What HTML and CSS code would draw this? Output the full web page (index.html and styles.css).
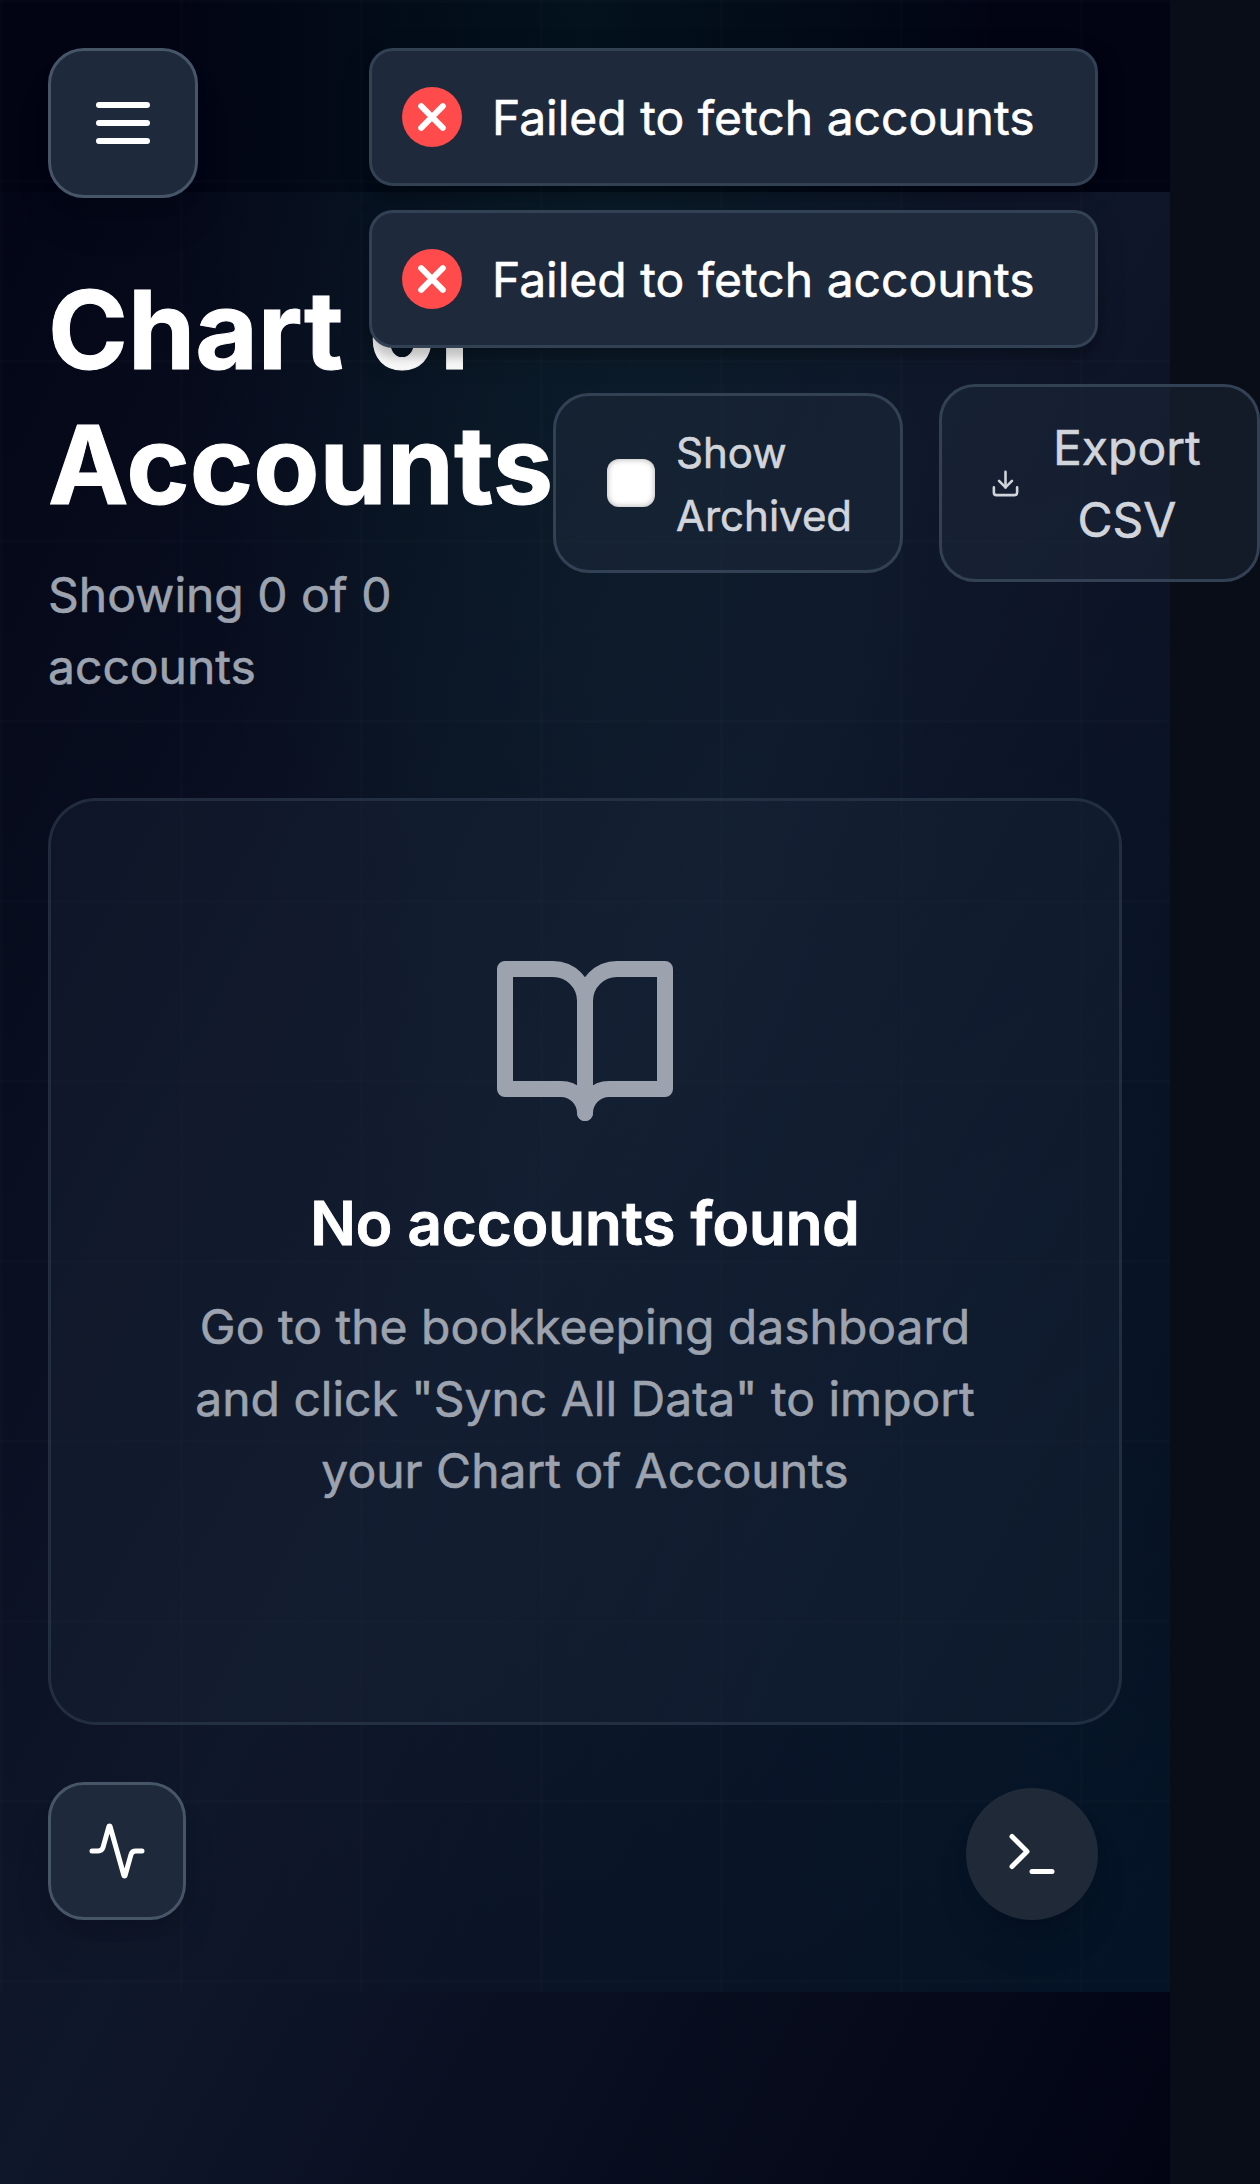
FILE: index.html
```html
<!DOCTYPE html>
<html lang="en">
<head>
<meta charset="utf-8">
<title>Chart of Accounts</title>
<link rel="stylesheet" href="styles.css">
</head>
<body>
<div class="app">
  <div class="topbar"></div>
  <div class="backdrop"></div>
  <main class="content">
    <header class="page-head">
      <div class="heading">
        <h1>Chart of Accounts</h1>
        <p>Showing 0 of 0 accounts</p>
      </div>
      <div class="actions">
        <label class="toggle"><span class="checkbox"></span><span class="label">Show<br>Archived</span></label>
        <button class="export">
          <svg class="export-icon" viewBox="0 0 24 24"><path d="M12 15V3"/><path d="M21 15v4a2 2 0 0 1-2 2H5a2 2 0 0 1-2-2v-4"/><path d="m7 10 5 5 5-5"/></svg>
          <span class="label">Export<br>CSV</span>
        </button>
      </div>
    </header>
    <section class="empty">
      <svg class="empty-icon" viewBox="0 0 24 24"><path d="M2 3h6a4 4 0 0 1 4 4v14a3 3 0 0 0-3-3H2z"/><path d="M22 3h-6a4 4 0 0 0-4 4v14a3 3 0 0 1 3-3h7z"/></svg>
      <h3>No accounts found</h3>
      <p>Go to the bookkeeping dashboard and click "Sync All Data" to import your Chart of Accounts</p>
    </section>
  </main>
  <button class="float menu" aria-label="Menu"><svg viewBox="0 0 24 24"><path d="M4 6h16M4 12h16M4 18h16"/></svg></button>
  <button class="float activity" aria-label="Activity"><svg viewBox="0 0 24 24"><path d="M22 12h-2.48a2 2 0 0 0-1.93 1.46l-2.35 8.36a.25.25 0 0 1-.48 0L9.24 2.18a.25.25 0 0 0-.48 0l-2.35 8.36A2 2 0 0 1 4.49 12H2"/></svg></button>
  <button class="float terminal" aria-label="Terminal"><svg viewBox="0 0 24 24"><path d="m4 17 6-6-6-6"/><path d="M12 19h8"/></svg></button>
  <div class="toasts">
    <div class="toast"><svg viewBox="0 0 20 20"><circle cx="10" cy="10" r="10"/><path d="M6.4 6.4l7.2 7.2M13.6 6.4l-7.2 7.2"/></svg><span class="label">Failed to fetch accounts</span></div>
    <div class="toast"><svg viewBox="0 0 20 20"><circle cx="10" cy="10" r="10"/><path d="M6.4 6.4l7.2 7.2M13.6 6.4l-7.2 7.2"/></svg><span class="label">Failed to fetch accounts</span></div>
  </div>
</div>
</body>
</html>
```
FILE: styles.css
```css
* { box-sizing: border-box; }
body {
  margin: 0;
  background: #090d17;
  font-family: Inter, "Liberation Sans", sans-serif;
  font-size: 48px;
  line-height: 72px;
  color: #fff;
  overflow: hidden;
  -webkit-text-stroke: .6px currentColor;
}
h1, h3, p { margin: 0; }
button { font: inherit; color: inherit; margin: 0; padding: 0; }
svg { display: block; flex: none; fill: none; stroke: currentColor; stroke-width: 2; stroke-linecap: round; stroke-linejoin: round; }

.app {
  position: relative;
  width: 1170px;
  height: 2184px;
  background: linear-gradient(to bottom right, #020414, #0f172a 50%, #020414);
}
.topbar { height: 192px; background: #020414; }
.backdrop {
  position: absolute;
  inset: 0 0 auto 0;
  height: 1992px;
  background:
    linear-gradient(to right, rgba(148, 163, 184, .014) 3px, transparent 3px) 0 0 / 180px 180px,
    linear-gradient(to bottom, rgba(148, 163, 184, .014) 3px, transparent 3px) 0 0 / 180px 180px,
    radial-gradient(ellipse at 50% 0, rgba(16, 185, 129, .08), transparent 50%),
    radial-gradient(ellipse at 100% 100%, rgba(10, 180, 220, .08), transparent 55%);
}

.label { padding-top: 2px; }
.content { position: relative; padding: 72px 48px 0; }
.page-head { display: flex; align-items: center; width: 1212px; height: 438px; }
.heading { width: 505px; flex: none; }
.heading h1 { margin-top: -2px; font-size: 108px; line-height: 135px; font-weight: 700; -webkit-text-stroke-width: 1px; }
.heading p { margin-top: 27px; width: 400px; color: #9ca3af; }
.actions { display: flex; align-items: center; gap: 36px; flex: 1; }
.toggle, .export {
  display: flex;
  align-items: center;
  border: 3px solid #334155;
  border-radius: 36px;
  background: rgba(30, 41, 59, .5);
  color: #d1d5db;
}
.toggle { width: 350px; height: 180px; padding-left: 51px; gap: 21px; font-size: 42px; line-height: 63px; }
.checkbox { width: 48px; height: 48px; border-radius: 12px; background: #fff; box-shadow: inset 0 0 6px rgba(0, 0, 0, .35); }
.export { width: 321px; height: 198px; padding-left: 48px; gap: 32px; text-align: center; }
.export-icon { width: 31px; height: 31px; }

.empty {
  margin-top: 96px;
  height: 927px;
  padding: 144px 117px;
  display: flex;
  flex-direction: column;
  align-items: center;
  text-align: center;
  border: 3px solid rgba(51, 65, 85, .5);
  border-radius: 48px;
  background: rgba(30, 41, 59, .35);
  color: #9ca3af;
}
.empty-icon { width: 192px; height: 192px; }
.empty h3 { margin: 49px 0 30px; font-size: 60px; line-height: 75px; font-weight: 600; color: #fff; -webkit-text-stroke-width: .9px; }

.float {
  position: absolute;
  display: flex;
  align-items: center;
  justify-content: center;
  border: 3px solid #475569;
  border-radius: 36px;
  background: #1e293b;
  box-shadow: 0 30px 45px -9px rgba(0, 0, 0, .1), 0 12px 18px -6px rgba(0, 0, 0, .1);
}
.float svg { width: 60px; height: 60px; }
.menu { left: 48px; top: 48px; width: 150px; height: 150px; }
.float.menu svg { width: 72px; height: 72px; }
.activity { left: 48px; top: 1782px; width: 138px; height: 138px; }
.terminal { left: 966px; top: 1788px; width: 132px; height: 132px; border: 0; border-radius: 50%; background: #1f2937; }

.toasts { position: absolute; top: 48px; right: 72px; display: flex; flex-direction: column; gap: 24px; }
.toast {
  display: flex;
  align-items: center;
  gap: 30px;
  width: 729px;
  height: 138px;
  padding: 0 30px;
  border: 3px solid #334155;
  border-radius: 24px;
  background: #1e293b;
  box-shadow: 0 9px 30px rgba(0, 0, 0, .15), 0 9px 9px rgba(0, 0, 0, .15);
}
.toast svg { width: 60px; height: 60px; }
.toast circle { fill: #ff4b4b; stroke: none; }
.toast path { stroke: #fff; }
```
